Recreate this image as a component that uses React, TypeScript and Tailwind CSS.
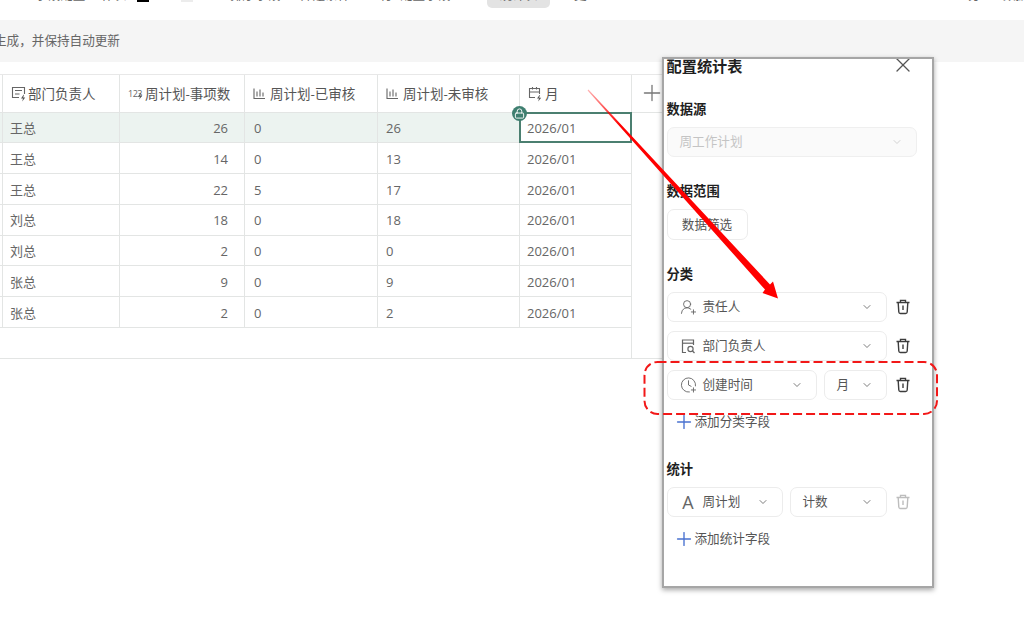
import React from "react";
import { ChevronDown, ClockPlus, UserRoundPlus, X, Plus, Lock } from "lucide-react";

const gridCols = "grid grid-cols-[3px_117px_125px_133px_142px_112px_38px]";

const Bolt = ({ x, y }: { x: number; y: number }) => (
  <path d={`M${x + 2.5} ${y}L${x} ${y + 3.6}h2L${x + 1.2} ${y + 6.6}L${x + 4.2} ${y + 2.8}h-2L${x + 3} ${y}z`} fill="#555" stroke="none" />
);

const PersonBolt = () => (
  <svg width="16" height="16" viewBox="0 0 16 16" fill="none" stroke="#666" strokeWidth="1.1" className="shrink-0">
    <path d="M8 11.5H1.5V1.5h12V8" />
    <path d="M4 4.5h7M4 8h4.5" />
    <Bolt x={10} y={8.8} />
  </svg>
);

const NumBolt = () => (
  <span className="relative flex w-[16px] shrink-0 items-center text-[9px] leading-none tracking-[-0.5px] text-[#666]">
    123
    <svg width="7" height="9" viewBox="0 0 7 9" className="absolute right-0 top-[3px]">
      <Bolt x={1} y={1} />
    </svg>
  </span>
);

const Bars = () => (
  <svg width="13" height="13" viewBox="0 0 13 13" fill="none" stroke="#666" strokeWidth="1.1" className="shrink-0">
    <path d="M1 1.5v10h11M4 4.5v5M7 2.5v7M10 5.5v4" />
  </svg>
);

const CalBolt = () => (
  <svg width="15" height="16" viewBox="0 0 15 16" fill="none" stroke="#666" strokeWidth="1.1" className="shrink-0">
    <path d="M7 11.5H1.5v-9h10V8M1.5 6h10M4.5 1v2.5M8.5 1v2.5" />
    <Bolt x={9} y={9} />
  </svg>
);

const Trash = ({ muted }: { muted?: boolean }) => (
  <svg width="16" height="16" viewBox="0 0 16 16" fill="none" stroke={muted ? "#bdbdbd" : "#3c3c3c"} strokeWidth="1.4" className="shrink-0">
    <path d="M1.5 3.5h13M5.5 3.2V1.4h5v1.8M3.2 3.7l.6 9.3q.1 1.5 1.6 1.5h5.2q1.5 0 1.6-1.5l.6-9.3M8 6.5v4.5" />
  </svg>
);

const FileFind = () => (
  <svg width="15" height="15" viewBox="0 0 15 15" fill="none" stroke="#666" strokeWidth="1.2" className="shrink-0">
    <path d="M5 13.5H1.5V1h11v5" />
    <path d="M1.5 4.2h11" />
    <circle cx="9.5" cy="10" r="2.6" />
    <path d="M11.5 12l2 2" />
  </svg>
);

const Select = ({
  className,
  icon,
  label,
  textClass = "text-[#555]",
}: {
  className: string;
  icon?: React.ReactNode;
  label: string;
  textClass?: string;
}) => (
  <div className={`flex h-[30px] items-center rounded-[7px] border border-[#ececec] pr-[13px] pl-[12px] ${className}`}>
    {icon && <span className="mr-[6px] flex w-[17px] justify-center">{icon}</span>}
    <span className={`flex-1 pt-[1px] text-[12.6px] leading-none ${textClass}`}>{label}</span>
    <ChevronDown size={12} strokeWidth={1.7} color="#666" />
  </div>
);

const SectionTitle = ({ children, className }: { children: React.ReactNode; className: string }) => (
  <div className={`text-[13.3px] leading-[18px] font-bold text-[#1f1f1f] ${className}`}>{children}</div>
);

const AddField = ({ label, className }: { label: string; className: string }) => (
  <div className={`flex h-[18px] items-center pl-[6px] text-[12.6px] text-[#555] ${className}`}>
    <Plus size={22} strokeWidth={1.5} color="#4a72d0" className="shrink-0" />
    {label}
  </div>
);

const rows = [
  ["王总", "26", "0", "26"],
  ["王总", "14", "0", "13"],
  ["王总", "22", "5", "17"],
  ["刘总", "18", "0", "18"],
  ["刘总", "2", "0", "0"],
  ["张总", "9", "0", "9"],
  ["张总", "2", "0", "2"],
];

const cell = "flex items-center border-r border-b border-[#e3e5e4]";

const headers: [React.ReactNode, string, string][] = [
  [<PersonBolt />, "部门负责人", "pl-[8px] gap-[1px]"],
  [<NumBolt />, "周计划-事项数", "pl-[8px] gap-[1px]"],
  [<Bars />, "周计划-已审核", "pl-[8px] gap-[4px]"],
  [<Bars />, "周计划-未审核", "pl-[8px] gap-[4px]"],
  [<CalBolt />, "月", "pl-[8px] gap-[2px]"],
];

export default function App() {
  return (
    <div className="relative h-[622px] w-[1024px] overflow-hidden bg-white font-['Open_Sans','Noto_Sans_CJK_SC',sans-serif]">
      {/* toolbar, cut off by the top of the window */}
      <div className="flex h-[20px] items-start overflow-hidden text-[12.6px] leading-none whitespace-nowrap text-[#666] *:shrink-0">
        <span className="-mt-[11px] w-[137px] pl-[35px]">字段配置 工作表</span>
        <span className="h-[2px] w-[12px] bg-black" />
        <span className="ml-[32px] h-[2px] w-[12px] bg-[#ececec]" />
        <span className="-mt-[11px] ml-[37px] w-[70px]">排序字段</span>
        <span className="-mt-[11px] w-[80px]">筛选条件</span>
        <span className="-mt-[11px] w-[20px]">行</span>
        <span className="-mt-[11px] w-[87px]">配置字段</span>
        <span className="flex h-[7.5px] w-[63px] items-start justify-center rounded-b-[5px] bg-[#e3e3e3]">
          <span className="-mt-[11px]">统计表</span>
        </span>
        <span className="-mt-[11px] ml-[24px] w-[13px]">更</span>
        <span className="-mt-[11px] ml-[381px] w-[13px]">分</span>
        <span className="-mt-[11px] ml-[22px]">数据</span>
      </div>

      {/* banner */}
      <div className="flex h-[42px] items-center bg-[#f5f5f5] pt-[1px] text-[12.6px] text-[#666]">
        <span className="-ml-[6px]">生成，并保持自动更新</span>
      </div>

      {/* table */}
      <div className="mt-[12px] w-[670px] border-t border-[#e8e8e8] text-[13px] text-[#666]">
        <div className={`${gridCols} h-[37.5px]`}>
          <div className={cell} />
          {headers.map(([icon, label, cls], i) => (
            <div key={i} className={`${cell} ${cls} pt-[1px] text-[13.5px] text-[#555]`}>
              {icon}
              <span>{label}</span>
            </div>
          ))}
          <div className="flex items-center border-b border-[#e3e5e4] pl-[7px]">
            <Plus size={26} strokeWidth={1.2} color="#777" />
          </div>
        </div>

        {rows.map((r, i) => {
          const bg = i === 0 ? "bg-[#ecf3f0]" : "";
          return (
            <div key={i} className={`${gridCols} h-[30.75px]`}>
              <div className={`${cell} ${bg}`} />
              <div className={`${cell} ${bg} pt-[3px] pl-[7px]`}>{r[0]}</div>
              <div className={`${cell} ${bg} justify-end pt-[3px] pr-[16px]`}>{r[1]}</div>
              <div className={`${cell} ${bg} pt-[3px] pl-[9px]`}>{r[2]}</div>
              <div className={`${cell} ${bg} pt-[3px] pl-[8px]`}>{r[3]}</div>
              <div className={`relative ${cell} pt-[3px] pl-[7px]`}>
                2026/01
                {i === 0 && (
                  <>
                    <span className="absolute -top-px -right-px -bottom-px -left-px border-2 border-[#4b7f70]" />
                    <span className="absolute -top-[7px] -left-[8px] flex h-[15px] w-[15px] items-center justify-center rounded-full bg-[#3f7f70]">
                      <Lock size={11} strokeWidth={2} color="#fff" />
                    </span>
                  </>
                )}
              </div>
              <div />
            </div>
          );
        })}

        <div className={`${gridCols} h-[31px] border-b border-[#e3e5e4]`}>
          <div className="col-span-6 border-r border-[#e3e5e4]" />
          <div />
        </div>
      </div>

      {/* settings panel */}
      <div className="absolute top-[57px] left-[662px] h-[531px] w-[272px] overflow-hidden border-2 border-[#a6a6a6] bg-white pl-[2.5px] shadow-[0_2px_5px_rgba(0,0,0,0.35)]">
        <div className="flex h-[15px] items-center">
          <span className="text-[15.2px] leading-none font-bold text-[#1f1f1f]">配置统计表</span>
          <X size={24} strokeWidth={1.3} color="#555" className="-mt-[4px] ml-[149px] shrink-0" />
        </div>

        <SectionTitle className="mt-[26px]">数据源</SectionTitle>
        <div className="mt-[9px] flex h-[30px] w-[250px] items-center rounded-[7px] border border-[#efefef] bg-[#fafafa] pr-[13px] pl-[12px] text-[12.6px] text-[#c4c4c4]">
          <span className="flex-1">周工作计划</span>
          <ChevronDown size={12} strokeWidth={1.5} color="#c4c4c4" />
        </div>

        <SectionTitle className="mt-[25px]">数据范围</SectionTitle>
        <div className="mt-[9px] flex h-[31px] w-[81px] items-center justify-center rounded-[7px] border border-[#ececec] pt-[1px] text-[12.6px] text-[#555]">
          数据筛选
        </div>

        <SectionTitle className="mt-[25px]">分类</SectionTitle>
        <div className="mt-[9px] flex items-center">
          <Select className="w-[220px]" icon={<UserRoundPlus size={18} strokeWidth={1.3} color="#666" />} label="责任人" />
          <span className="ml-[8px]"><Trash /></span>
        </div>
        <div className="mt-[9px] flex items-center">
          <Select className="w-[220px]" icon={<FileFind />} label="部门负责人" />
          <span className="ml-[8px]"><Trash /></span>
        </div>
        <div className="mt-[9px] flex items-center">
          <Select className="w-[150px]" icon={<ClockPlus size={18} strokeWidth={1.3} color="#666" />} label="创建时间" />
          <Select className="ml-[7px] w-[63px]" label="月" />
          <span className="ml-[8px]"><Trash /></span>
        </div>
        <AddField className="mt-[13px]" label="添加分类字段" />

        <SectionTitle className="mt-[29px]">统计</SectionTitle>
        <div className="mt-[9px] flex items-center">
          <Select
            className="w-[116px]"
            icon={<span className="text-[18px] leading-none text-[#666]">A</span>}
            label="周计划"
          />
          <Select className="ml-[7px] w-[97px]" label="计数" />
          <span className="ml-[8px]"><Trash muted /></span>
        </div>
        <AddField className="mt-[13px]" label="添加统计字段" />
      </div>

      {/* annotations drawn over the screenshot */}
      <svg className="pointer-events-none absolute top-0 left-0" width="1024" height="622" viewBox="0 0 1024 622" fill="none">
        <defs>
          <linearGradient id="fade" gradientUnits="userSpaceOnUse" x1="588" y1="90" x2="620" y2="125">
            <stop offset="0" stopColor="#ff0000" stopOpacity="0.3" />
            <stop offset="1" stopColor="#ff0000" />
          </linearGradient>
        </defs>
        <polygon points="588.4,89.6 770,284.5 773,281.5 778,298.5 762.5,293 765,289.5 587.6,90.4" fill="url(#fade)" />
        <rect x="644.5" y="362" width="292.5" height="52" rx="13" stroke="#f21818" strokeWidth="2" strokeDasharray="9 4" />
      </svg>
    </div>
  );
}
